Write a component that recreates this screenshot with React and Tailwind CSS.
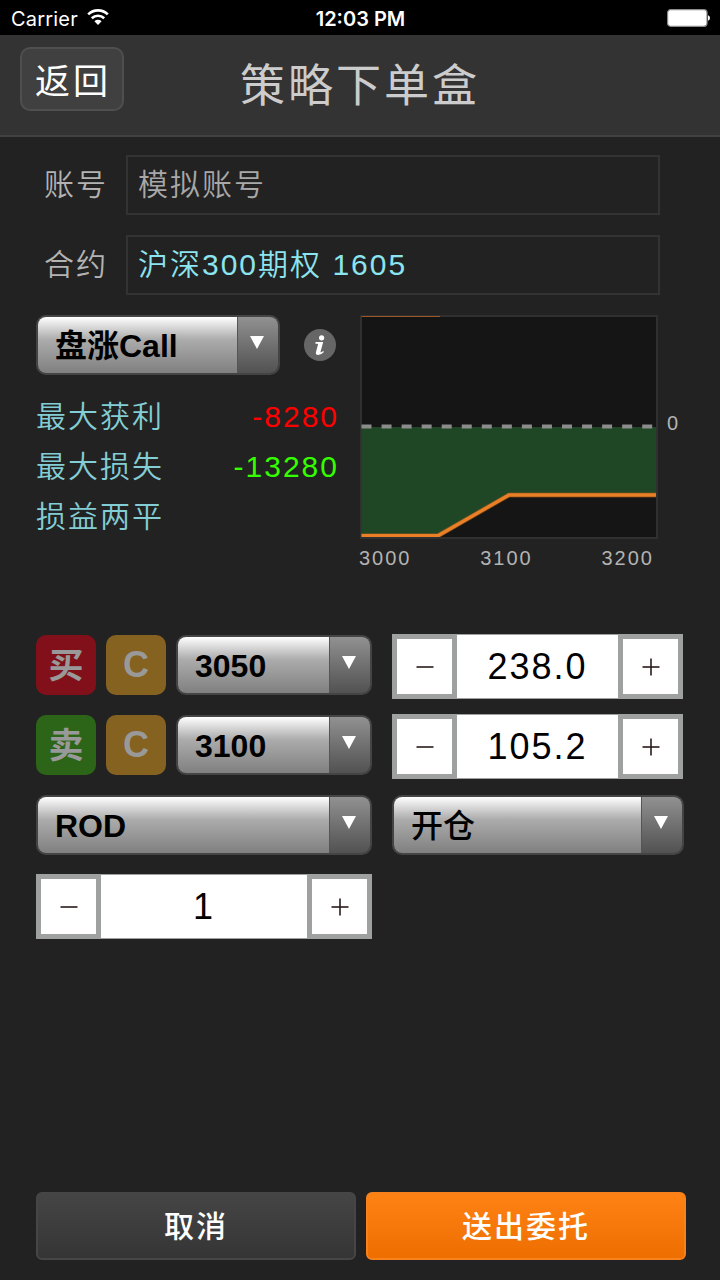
import React from "react";

const legs = [
  { side: "买", color: "bg-[#82101a]", type: "C", strike: "3050", price: "238.0" },
  { side: "卖", color: "bg-[#2c6517]", type: "C", strike: "3100", price: "105.2" },
];

const stats = [
  { label: "最大获利", value: "-8280", color: "text-[#fe0000]" },
  { label: "最大损失", value: "-13280", color: "text-[#33ff00]" },
  { label: "损益两平", value: "", color: "" },
];

function StatusBar() {
  return (
    <div className="flex h-[35px] items-center bg-black pl-[11px] pr-[10px] font-['Inter'] text-white">
      <div className="flex flex-1 items-center gap-[9px]">
        <span className="pt-[2px] text-[20px] leading-none tracking-[0.2px]">Carrier</span>
        <svg width="22" height="18" viewBox="0 0 22 18" fill="none">
          <path d="M1.2 5.4a14 14 0 0 1 19.6 0" stroke="#fff" strokeWidth="2.6" />
          <path d="M4.8 9.2a8.9 8.9 0 0 1 12.4 0" stroke="#fff" strokeWidth="2.6" />
          <path d="M11 16 7.4 12.3a5.2 5.2 0 0 1 7.2 0z" fill="#fff" />
        </svg>
      </div>
      <span className="pt-[2px] text-[20px] font-semibold leading-none">12:03 PM</span>
      <div className="flex flex-1 justify-end">
        <svg width="43" height="18" viewBox="0 0 43 18">
          <rect x="0.6" y="0.7" width="39.4" height="16.6" rx="3" fill="#fff" stroke="#8a8a8a" strokeWidth="1.2" />
          <path d="M41 6.2q2 .8 2 2.8t-2 2.8z" fill="#fff" />
        </svg>
      </div>
    </div>
  );
}

function Field({ label, value, valueColor }) {
  return (
    <div className="flex h-[60px] items-center">
      <span className="w-[82px] tracking-[2px] text-[#b3b3b3]">{label}</span>
      <div className={`flex h-[60px] w-[534px] items-center border-2 border-[#333] pl-[10px] tracking-[2px] ${valueColor}`}>
        {value}
      </div>
    </div>
  );
}

function Select({ value, width, weight = "font-bold" }) {
  return (
    <button className={`flex h-[60px] overflow-hidden rounded-[10px] border-2 border-[#444] text-[32px] leading-[36px] ${width}`}>
      <span className={`flex h-full flex-1 items-center border-r border-[#555] bg-linear-to-b from-white via-[#acacac] via-40% to-[#808080] pl-[17px] pt-px text-left text-black ${weight}`}>
        {value}
      </span>
      <span className="flex h-full w-[40px] justify-center bg-linear-to-b from-[#919191] to-[#525252] pr-[3px] pt-[19px]">
        <svg width="14" height="13" viewBox="0 0 14 13">
          <path d="M0 0h14L7 13z" fill="#fff" />
        </svg>
      </span>
    </button>
  );
}

function StepButton({ plus }) {
  return (
    <button className="flex h-[65px] w-[65px] items-center justify-center border-5 border-[#9fa1a0] bg-white">
      <svg width="18" height="18" viewBox="0 0 18 18" stroke="#2b1b1b" strokeWidth="1.6">
        <path d="M0.5 9h17" />
        {plus && <path d="M9 0.5v17" />}
      </svg>
    </button>
  );
}

function Stepper({ value, width }) {
  return (
    <div className={`flex h-[65px] bg-white ${width}`}>
      <StepButton />
      <span className="flex flex-1 items-center justify-center border-y border-[#9fa1a0] pt-px text-[36px] leading-none tracking-[2px] text-black">
        {value}
      </span>
      <StepButton plus />
    </div>
  );
}

function Badge({ text, color, font }) {
  return (
    <span className={`flex h-[60px] w-[60px] items-center justify-center rounded-[10px] leading-none text-[#999] ${font} ${color}`}>
      {text}
    </span>
  );
}

function PayoffChart() {
  return (
    <div className="w-[324px]">
      <div className="flex">
        <svg width="298" height="224" viewBox="0 0 298 224">
          <rect x="1" y="1" width="296" height="222" fill="#151515" stroke="#303030" strokeWidth="2" />
          <path d="M1.5 112H296v68H149L78 222H1.5z" fill="#1f4726" />
          <path d="M1.5 111.5H296" stroke="#8c8c8c" strokeWidth="4" strokeDasharray="10 10.05" />
          <path d="M1.5 1.5H80" stroke="#9a5626" strokeWidth="1.2" />
          <path d="M1.5 220.7H78L149 180H296" fill="none" stroke="#9a5a22" strokeWidth="5" strokeOpacity="0.6" />
          <path d="M1.5 220.7H78L149 180H296" fill="none" stroke="#ea7f26" strokeWidth="3.4" />
          <path d="M0 223H298" stroke="#303030" strokeWidth="2" />
        </svg>
        <span className="pl-[9px] pt-[97px] text-[20px] leading-[23px] text-[#b3b3b3]">0</span>
      </div>
      <div className="-ml-px flex w-[295px] justify-between pt-[8px] text-[20px] leading-[23px] tracking-[2px] text-[#b3b3b3]">
        <span>3000</span>
        <span>3100</span>
        <span>3200</span>
      </div>
    </div>
  );
}

export default function App() {
  return (
    <div className="flex h-[1280px] w-[720px] flex-col overflow-hidden bg-[#222] font-['Liberation_Sans','Noto_Sans_CJK_SC',sans-serif] text-[30px] leading-[34px]">
      <StatusBar />

      <header className="flex h-[102px] items-start border-b-2 border-[#424242] bg-[#333] pl-5 pt-3">
        <button className="flex h-[64px] w-[104px] items-center justify-center rounded-[10px] border-2 border-[#4f4f4f] bg-[#404040] pl-0.5 pt-[4px] text-[35px] font-normal leading-none tracking-[3px] text-white">
          返回
        </button>
        <h1 className="ml-[116px] pt-[15px] text-[45px] font-normal leading-[50px] tracking-[3px] text-[#ccc]">策略下单盒</h1>
      </header>

      <section className="flex flex-col gap-5 pl-[44px] pt-[18px] font-[350]">
        <Field label="账号" value="模拟账号" valueColor="text-[#a8a8a8]" />
        <Field label="合约" value="沪深300期权 1605" valueColor="text-[#8be4ef]" />
      </section>

      <section className="flex pl-9 pt-5">
        <div className="w-[324px]">
          <div className="flex items-center gap-6">
            <Select value="盘涨Call" width="w-[244px]" />
            <svg width="32" height="32" viewBox="0 0 32 32">
              <circle cx="16" cy="16" r="16" fill="#666" />
              <circle cx="17.6" cy="8.8" r="2.6" fill="#fff" />
              <path d="M11.6 13h7.6l-2.6 9.4q-.2 1.2.7.8l1.9-1.1.7.9q-2.8 3-5.7 3-3 0-2.2-3l2-7.4q.2-.8-.7-.8h-2z" fill="#fff" />
            </svg>
          </div>
          <div className="flex w-[303px] flex-col pt-[17px]">
            {stats.map((s) => (
              <div key={s.label} className="flex h-[50px] items-center justify-between tracking-[2px]">
                <span className="font-[350] text-[#83cdd5]">{s.label}</span>
                <span className={s.color}>{s.value}</span>
              </div>
            ))}
          </div>
        </div>
        <PayoffChart />
      </section>

      <section className="flex flex-col pl-9 pt-16">
        {legs.map((leg) => (
          <div key={leg.strike} className="flex h-20 items-start">
            <div className="flex gap-[10px] pr-5 pt-px">
              <Badge text={leg.side} color={leg.color} font="text-[35px] font-bold" />
              <Badge text={leg.type} color="bg-[#85621f]" font="text-[36px] font-bold" />
              <Select value={leg.strike} width="w-[196px]" />
            </div>
            <Stepper value={leg.price} width="w-[291px]" />
          </div>
        ))}
        <div className="flex h-20 gap-5 pt-px">
          <Select value="ROD" width="w-[336px]" />
          <Select value="开仓" width="w-[292px]" weight="font-medium" />
        </div>
        <Stepper value="1" width="w-[336px]" />
      </section>

      <footer className="mt-auto flex gap-[10px] pb-5 pl-9 font-medium tracking-[2px] text-white">
        <button className="h-[68px] w-[320px] rounded-[6px] border-2 border-[#464646] bg-linear-to-b from-[#454545] to-[#353535] pt-px">取消</button>
        <button className="h-[68px] w-[320px] rounded-[6px] border-2 border-[#f9811c] bg-linear-to-b from-[#ff8214] to-[#ee6e00] pt-px">送出委托</button>
      </footer>
    </div>
  );
}
